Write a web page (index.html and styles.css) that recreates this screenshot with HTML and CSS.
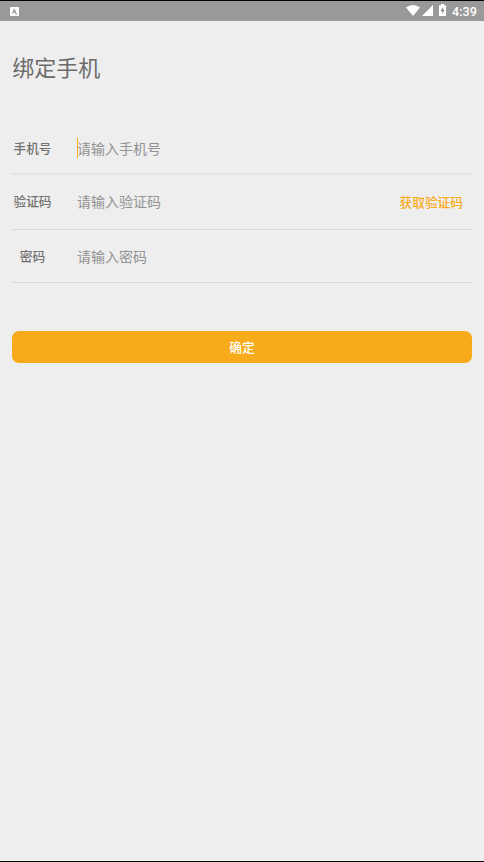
FILE: index.html
```html
<!DOCTYPE html>
<html lang="zh-CN">
<head>
<meta charset="utf-8">
<title>绑定手机</title>
<link rel="stylesheet" href="styles.css">
</head>
<body>
<header class="status">
  <svg class="status-app" width="9" height="9" viewBox="0 0 9 9"><rect width="9" height="9" rx="1" fill="#fff"/><path d="M2.5 6.5 4.3 2.3 6.1 6.5M3.2 5.2H5.4M5.5 7H7" fill="none" stroke="#888" stroke-width="1"/></svg>
  <svg class="status-wifi" width="14" height="11" viewBox="0 0 14 11"><path d="M0 2.5Q7-2.5 14 2.5L7 11Z" fill="#fff"/></svg>
  <svg class="status-signal" width="11" height="11" viewBox="0 0 11 11"><path d="M11 0V11H0Z" fill="#fff"/></svg>
  <svg class="status-battery" width="7" height="12" viewBox="0 0 7 12"><path d="M2 0H5V1.3H7V12H0V1.3H2Z" fill="#fff"/><path d="M4.2 3 1.4 7H3.2V10L5.8 6H4.2Z" fill="#888"/></svg>
  <span class="clock">4:39</span>
</header>
<main class="page">
  <h1 class="title">绑定手机</h1>
  <form class="form">
    <div class="row row-phone">
      <label class="label" for="phone">手机号</label>
      <div class="field"><input class="input" id="phone" type="tel" placeholder="请输入手机号"><i class="caret"></i></div>
    </div>
    <div class="row row-code">
      <label class="label" for="code">验证码</label>
      <div class="field"><input class="input" id="code" type="text" placeholder="请输入验证码"></div>
      <button class="get-code" type="button">获取验证码</button>
    </div>
    <div class="row row-password">
      <label class="label" for="password">密码</label>
      <div class="field"><input class="input" id="password" type="password" placeholder="请输入密码"></div>
    </div>
    <button class="submit" type="button">确定</button>
  </form>
</main>
</body>
</html>
```
FILE: styles.css
```css
* { box-sizing: border-box; }
body {
  margin: 0;
  height: 862px;
  display: flex;
  flex-direction: column;
  overflow: hidden;
  background: #eee;
  border-top: 1px solid #000;
  border-bottom: 1px solid #000;
  color: #6b6b6b;
  font-family: "Noto Sans CJK SC", sans-serif;
}
.status {
  height: 20px;
  flex: none;
  display: flex;
  align-items: center;
  padding: 0 6px 0 10px;
  background: #999;
}
.status svg { display: block; }
.status .status-app { margin-right: auto; }
.status .status-wifi { margin-bottom: 1px; }
.status .status-signal { margin: 0 0 1px 2px; }
.status .status-battery { margin: 0 6px 2px 6px; }
.clock {
  width: 26px;
  padding-top: 1px;
  color: #fff;
  font: 500 12.6px/20px Roboto, sans-serif;
  white-space: nowrap;
}
.page { padding: 0 12px; }
.title {
  margin: 29px 0 41px;
  height: 33px;
  padding-left: 0.3px;
  font-size: 22px;
  line-height: 33px;
  font-weight: 400;
}
.form { display: flex; flex-direction: column; }
.row {
  display: flex;
  align-items: center;
  border-bottom: 1px solid #d9d9d9;
}
.row-phone {
  height: 51px;
  padding-bottom: 2px;
  border-bottom: 2px solid #e4e4e4;
}
.row-code { height: 55px; padding-bottom: 2px; }
.row-password { height: 53px; }
.label {
  width: 41px;
  text-align: center;
  color: #727272;
  font-size: 12.7px;
  line-height: 20px;
  font-weight: 500;
}
.field {
  flex: 1;
  display: flex;
  align-items: center;
  position: relative;
  margin-left: 24px;
}
.input {
  width: 100%;
  height: 22px;
  padding: 0;
  border: 0;
  outline: 0;
  background: none;
  color: #6b6b6b;
  font: 400 14px/22px "Noto Sans CJK SC", sans-serif;
}
.input::placeholder { color: #929292; opacity: 1; }
.caret {
  position: absolute;
  left: 0;
  top: 1px;
  width: 1px;
  height: 20px;
  background: #f8ab1a;
}
.get-code {
  flex: none;
  margin: 1px 9px 0 0;
  padding: 0;
  border: 0;
  background: none;
  color: #f8ab1a;
  font: 500 12.7px/20px "Noto Sans CJK SC", sans-serif;
}
.submit {
  height: 32px;
  margin-top: 48px;
  padding: 0;
  border: 0;
  border-radius: 7px;
  background: #f8ab1a;
  color: #fff;
  font: 500 12.7px/32px "Noto Sans CJK SC", sans-serif;
}
```
